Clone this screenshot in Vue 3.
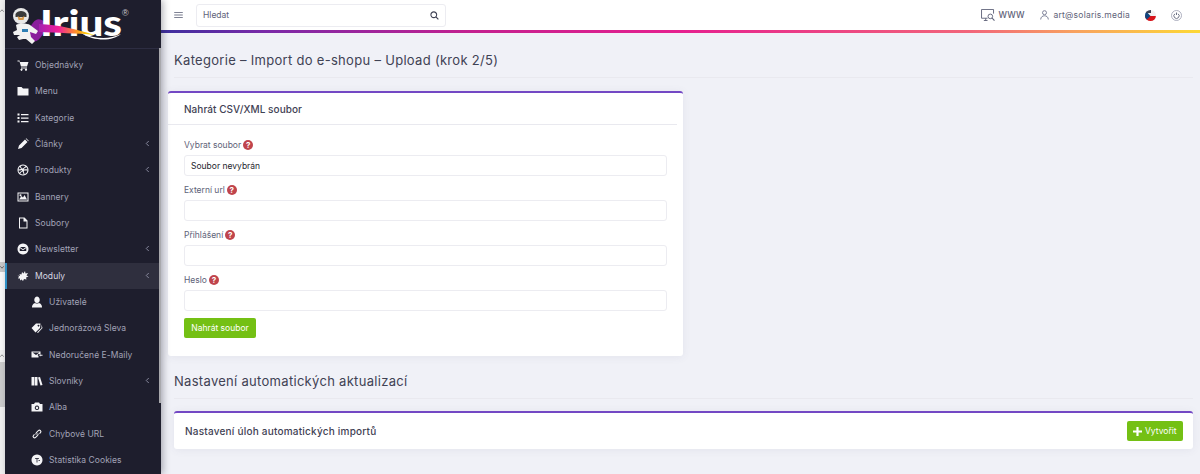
<script setup>
const icons = {
  cart: 'M1 3h4l1 3h17l-3 9H8L5 5H1zM8 17h12v2H8zM9 19.500a2 2 0 1 0 .01 0zM18 19.500a2 2 0 1 0 .01 0z',
  folder: 'M1 4h8l3 3h11v14H1z',
  list: 'M1 3h4v4H1zM8 4h15v2.400H8zM1 10h4v4H1zM8 11h15v2.400H8zM1 17h4v4H1zM8 18h15v2.400H8z',
  pencil: 'M2 22l2-7L16 3l5 5L9 20zM17.500 1.500l1-1 5 5-1 1z',
  ball: 'M12 1a11 11 0 1 0 .01 0zm0 2a9 9 0 0 1 5 1.600C15 7 12.500 8.500 10 9.300 9.200 7.500 8.200 5.500 7.400 4.300A9 9 0 0 1 12 3zM5.700 5.500C6.600 7 7.500 8.500 8.300 10 6.500 10.500 4.500 10.800 3.200 10.800A9 9 0 0 1 5.700 5.500zM18.500 5.800A9 9 0 0 1 21 11c-2.500-.4-4.800-.3-6.800.1-.3-.6-.5-1.100-.8-1.600 1.900-.9 3.700-2.200 5.100-3.700zM3 12.800c2 0 4.500-.3 6.200-1l.7 1.500C7.600 14.200 6 16 4.900 17.700A9 9 0 0 1 3 12.800zM11.500 15c.8 1.800 1.400 3.800 1.700 5.900A9 9 0 0 1 6.300 19c1-1.600 2.900-3.200 5.200-4zm2.800-1.900c1.900-.4 4.300-.4 6.700 0a9 9 0 0 1-5.900 7.400c-.3-1.900-.8-3.800-1.500-5.700z',
  image: 'M1 3h22v18H1zm2 2v14h18V5zm1 12l5-7 3 3 3-5 5 9zM7 6.500a2 2 0 1 0 .01 0z',
  file: 'M4 1h11l6 6v16H4zm2 2v18h13V9h-6V3z',
  mailc: 'M12 1a11 11 0 1 0 .01 0zM6 8h12l-6 4.500zm-.5 2l6.500 4.700 6.500-4.700V16h-13z',
  puzzle: 'M1 11l5 1-1-4 4 1 1-5 3 3 3-5 1 5 5-1-3 5 4 2-5 2 1 4-5-1-2 4-3-3-3 2 0-4-4 0 2-4z',
  user: 'M12 1a5.500 6.500 0 1 0 .01 0zM2 23c0-4 1-7 6-9 2.500 1.500 5.500 1.500 8 0 5 2 6 5 6 9z',
  tags: 'M1 12L10 3h9l-1 9-9 9zM15 5.500a1.800 1.800 0 1 0 .01 0zM21 5l2 7-9 10-2-1 9-9z',
  mail: 'M1 5h18v5h-4l-2 2 2 2v3H1zm2 2l7 5 7-5zM16 12l3-2v1.500h4v2h-4v1.500z',
  books: 'M1 4h6v17H1zM8 4h5v17H8zM14 5l4-1 5 16-4 1z',
  camera: 'M8 3h8l2 3h5v15H1V6h5zm4 6a4.500 4.500 0 1 0 .01 0zm0 2a2.500 2.500 0 1 1-.01 0z',
  link: 'M10 14a4 4 0 0 1 0-5.600l4-4a4 4 0 0 1 5.700 5.700l-2 2-1.500-1.500 2-2a2 2 0 0 0-2.800-2.800l-4 4a2 2 0 0 0 0 2.800zM14 10a4 4 0 0 1 0 5.600l-4 4a4 4 0 0 1-5.700-5.700l2-2 1.500 1.500-2 2a2 2 0 0 0 2.800 2.800l4-4a2 2 0 0 0 0-2.800z',
  cookie: 'M12 1a11 11 0 1 0 .01 0zM8 8h8v1.600h-3.200V17h-1.600V9.600H8zM15 12h3v1.500h-3z'
}
const menu = [
  { label: 'Objednávky', icon: 'cart' },
  { label: 'Menu', icon: 'folder' },
  { label: 'Kategorie', icon: 'list' },
  { label: 'Články', icon: 'pencil', arrow: true },
  { label: 'Produkty', icon: 'ball', arrow: true },
  { label: 'Bannery', icon: 'image' },
  { label: 'Soubory', icon: 'file' },
  { label: 'Newsletter', icon: 'mailc', arrow: true },
  { label: 'Moduly', icon: 'puzzle', arrow: true, active: true },
  { label: 'Uživatelé', icon: 'user', sub: true },
  { label: 'Jednorázová Sleva', icon: 'tags', sub: true },
  { label: 'Nedoručené E-Maily', icon: 'mail', sub: true },
  { label: 'Slovníky', icon: 'books', sub: true, arrow: true },
  { label: 'Alba', icon: 'camera', sub: true },
  { label: 'Chybové URL', icon: 'link', sub: true },
  { label: 'Statistika Cookies', icon: 'cookie', sub: true }
]
const fields = [
  { label: 'Vybrat soubor', value: 'Soubor nevybrán' },
  { label: 'Externí url', value: '' },
  { label: 'Přihlášení', value: '' },
  { label: 'Heslo', value: '' }
]
</script>

<template>
  <div class="app">
    <div class="strip">
      <div class="s1"><svg class="tick" viewBox="0 0 4 3"><path d="M.3 2.700L2 .8l1.700 1.900" fill="none" stroke="#666" stroke-width=".7" /></svg></div>
      <div class="s2"><svg class="tick" viewBox="0 0 4 3"><path d="M.3.3L2 2.200 3.700.3" fill="none" stroke="#444" stroke-width=".7" /></svg></div>
      <div class="s3"></div>
      <div class="s3b"><svg class="tick" viewBox="0 0 4 3"><path d="M.3 2.700L2 .8l1.700 1.900" fill="none" stroke="#666" stroke-width=".7" /></svg></div>
      <div class="s4"></div>
      <div class="s5"></div>
    </div>
    <aside class="sidebar">
      <div class="brand">
        <svg width="156" height="48" viewBox="0 0 156 48">
          <defs>
            <linearGradient id="sw" x1="0" x2="1" y1="0" y2="0">
              <stop offset="0" stop-color="#a51fb0" />
              <stop offset="0.35" stop-color="#f0209a" />
              <stop offset="0.7" stop-color="#ff9a1f" />
              <stop offset="1" stop-color="#fff200" />
            </linearGradient>
          </defs>
          <path d="M22 34C28 20 32 16 40 22L38 34C32 44 26 44 22 34z" fill="#8a1d9c" />
          <text x="35" y="36" class="logo-text" textLength="82" lengthAdjust="spacingAndGlyphs">Irius</text>
          <path d="M34 24C54 25 72 29 89 35 72 33 52 33 34 32z" fill="url(#sw)" />
          <path d="M76 33c14 6 28 7 40 1-8 7-26 8-40-1z" fill="#fff" />
          <text x="117" y="16" class="logo-r">®</text>
          <circle cx="16" cy="16" r="8" fill="#e8e8e8" />
          <path d="M10.500 14c2-4 9-4 11 0v3h-11z" fill="#3a3a3a" />
          <path d="M12.500 16l3.500 2 3.500-2-1 4h-5z" fill="#d89a4a" />
          <path d="M11 25c3-2 11-2 14 0l8 6-2 3-6-2 1 5 4 4-3 3-6-5-3 0-4 1-2-3 3-2-6 0-1-3 4-2z" fill="#f2f2f2" />
          <rect x="17" y="29" width="6" height="3" fill="#2f7fb5" />
        </svg>
      </div>
      <nav class="nav">
        <div v-for="item in menu" :key="item.label" :class="['item', { active: item.active, sub: item.sub }]">
          <svg class="ico" viewBox="0 0 24 24"><path :d="icons[item.icon]" fill-rule="evenodd" /></svg>
          <span class="lbl">{{ item.label }}</span>
          <svg v-if="item.arrow" class="chev" viewBox="0 0 6 8"><path d="M4.500 1L1.500 4l3 3" fill="none" stroke="currentColor" stroke-width="1.100" /></svg>
        </div>
      </nav>
      <div class="sbar"></div>
    </aside>
    <main class="main">
      <header class="top">
        <svg class="burger" viewBox="0 0 10 7"><path d="M0 .5h10M0 3.500h10M0 6.500h10" stroke="#5e6278" stroke-width="1" /></svg>
        <div class="search">
          <span>Hledat</span>
          <svg class="sico" viewBox="0 0 10 10"><circle cx="4.200" cy="4.200" r="3.200" fill="none" stroke="#3f4254" stroke-width="1.200" /><path d="M6.600 6.600L9.300 9.300" stroke="#3f4254" stroke-width="1.300" /></svg>
        </div>
        <div class="tools">
          <div class="tool t-www">
            <svg class="wico" viewBox="0 0 15 13"><path d="M7 10H.5V.5h13V5M3 12.500h4M5 10v2.500" fill="none" stroke="#5e6278" stroke-width="1" /><circle cx="10" cy="8" r="2.500" fill="none" stroke="#5e6278" /><path d="M12 10l2.500 2.500" stroke="#5e6278" stroke-width="1.200" /></svg>
            <span>WWW</span>
          </div>
          <div class="tool t-user">
            <svg class="uico" viewBox="0 0 9 10"><circle cx="4.500" cy="2.700" r="2" fill="none" stroke="#7e8299" /><path d="M.7 9.500c0-5 7.600-5 7.600 0" fill="none" stroke="#7e8299" /></svg>
            <span>art@solaris.media</span>
          </div>
          <svg class="flag" viewBox="0 0 11 11"><defs><clipPath id="fc"><circle cx="5.500" cy="5.500" r="5.500" /></clipPath></defs><g clip-path="url(#fc)"><rect width="11" height="6" fill="#f2f2f2" /><rect y="6" width="11" height="5" fill="#d7141a" /><path d="M0 0l5.500 6L0 11z" fill="#11457e" /><rect x="1" y="0" width="5" height="3" fill="#3c4458" /></g></svg>
          <svg class="pow" viewBox="0 0 11 11"><circle cx="5.500" cy="5.500" r="5" fill="none" stroke="#9a9db0" stroke-width=".8" /><path d="M3.900 3.800a2.600 2.600 0 1 0 3.200 0" fill="none" stroke="#5e6278" stroke-width=".9" /><path d="M5.500 2.500v2.500" stroke="#5e6278" stroke-width=".9" /></svg>
        </div>
      </header>
      <div class="rainbow"></div>
      <section class="content">
        <h1 class="title first">Kategorie – Import do e-shopu – Upload (krok 2/5)</h1>
        <div class="card upload">
          <div class="card-head">Nahrát CSV/XML soubor</div>
          <div class="card-body">
            <div v-for="f in fields" :key="f.label" class="field">
              <label class="flabel">{{ f.label }}<span class="help">?</span></label>
              <div class="input">{{ f.value }}</div>
            </div>
            <button class="btn">Nahrát soubor</button>
          </div>
        </div>
        <h2 class="title second">Nastavení automatických aktualizací</h2>
        <div class="card tasks">
          <span class="tasks-title">Nastavení úloh automatických importů</span>
          <button class="btn add">
            <svg class="plus" viewBox="0 0 10 10"><path d="M3.800 0h2.400v3.800H10v2.400H6.200V10H3.800V6.200H0V3.800h3.800z" fill="#fff" /></svg>
            Vytvořit
          </button>
        </div>
      </section>
    </main>
  </div>
</template>

<style>
html, body { margin: 0; background: #f0f1f7; overflow: hidden; }
</style>

<style scoped>
.app {
  display: flex;
  width: 1200px;
  height: 474px;
  overflow: hidden;
  font-family: Inter, "Open Sans", sans-serif;
  background: #f0f1f7;
}
.strip { width: 5px; flex: none; display: flex; flex-direction: column; }
.tick { display: block; width: 4px; height: 3px; }
.s1 { height: 262px; background: #f1f1f1; padding-top: 9px; box-sizing: border-box; }
.s2 { height: 10px; background: #c9c9c9; padding-top: 4px; box-sizing: border-box; }
.s3 { height: 78px; background: #fafafa; }
.s3b { height: 12px; background: #f1f1f1; padding-top: 4px; box-sizing: border-box; }
.s4 { height: 45px; background: #cdcdcd; }
.s5 { flex: 1; background: #f1f1f1; }
.sidebar {
  position: relative;
  z-index: 2;
  width: 156px;
  flex: none;
  background: #1e1e2d;
  box-shadow: 2px 0 7px rgba(30, 30, 45, .35);
  overflow: hidden;
}
.brand { height: 48px; border-bottom: 1px solid #2d2d42; }
.brand svg { display: block; }
.logo-text { font-family: Lato, sans-serif; font-weight: 900; font-size: 36px; fill: #fff; }
.logo-r { font-family: "Liberation Sans", sans-serif; font-size: 9px; fill: #c9c9cf; }
.nav { padding-top: 3px; }
.item {
  position: relative;
  display: flex;
  align-items: center;
  height: 26.33px;
  padding-left: 12px;
  color: #a2a3b7;
  font-size: 8.5px;
  letter-spacing: .05px;
}
.item.sub { padding-left: 26px; }
.item.active { background: #2f2f3e; color: #d8d8e2; box-shadow: inset 2px 0 0 #2f8fc4; }
.ico { width: 12px; height: 12px; fill: #f4f4f6; flex: none; margin-right: 6px; }
.lbl { white-space: nowrap; }
.chev { position: absolute; left: 140px; top: 9px; width: 5px; height: 7px; color: #8f90a6; }
.sbar { position: absolute; right: 0; top: 48px; width: 2px; height: 355px; background: #a9a9ad; }
.main { flex: 1; min-width: 0; display: flex; flex-direction: column; }
.top {
  height: 30px;
  background: #fff;
  display: flex;
  align-items: center;
  padding-left: 13px;
  flex: none;
}
.burger { width: 9px; height: 6px; margin-right: 13px; }
.search {
  width: 250px;
  height: 23px;
  box-sizing: border-box;
  border: 1px solid #ececf1;
  border-radius: 3px;
  display: flex;
  align-items: center;
  justify-content: space-between;
  padding: 0 6px;
  font-size: 8.5px;
  color: #5e6278;
}
.sico { width: 9px; height: 9px; }
.tools { margin-left: auto; display: flex; align-items: center; padding-right: 18px; color: #5e6278; font-size: 8.5px; }
.tool { display: flex; align-items: center; }
.t-www { margin-right: 16px; font-weight: 500; }
.t-user { margin-right: 15px; letter-spacing: .25px; }
.wico { width: 14px; height: 12px; margin-right: 3px; }
.uico { width: 9px; height: 10px; margin-right: 4px; }
.flag { width: 11px; height: 11px; margin-right: 15px; }
.pow { width: 11px; height: 11px; }
.rainbow {
  height: 3px;
  flex: none;
  background: linear-gradient(90deg, #3d2f9e 0%, #7a2aa8 10%, #c4208f 30%, #e6208f 50%, #f2667a 78%, #f8a25f 88%, #fdd835 100%);
}
.content { flex: 1; padding: 0 7px 0 13px; }
.title {
  margin: 0;
  font-weight: 400;
  font-size: 13px;
  line-height: 20px;
  color: #3f4254;
  border-bottom: 1px solid #e9e9ef;
  letter-spacing: .3px;
  white-space: nowrap;
}
.first { padding: 17px 0 7px; }
.second { padding: 15px 0 7px; }
.card { background: #fff; border-top: 2px solid #7348c4; border-radius: 3px; box-shadow: 0 1px 8px rgba(80, 80, 120, .08); box-sizing: border-box; }
.upload { width: 515px; margin: 13px 0 0 -6px; height: 265px; }
.card-head {
  height: 31px;
  margin-right: 6px;
  padding-left: 16px;
  border-bottom: 1px solid #e9e9ef;
  display: flex;
  align-items: center;
  font-size: 10px;
  font-weight: 500;
  color: #3f4254;
  letter-spacing: .05px;
}
.card-body { padding: 13px 16px 0; }
.field { margin-bottom: 7px; }
.flabel { display: flex; align-items: center; height: 14px; margin-bottom: 3px; font-size: 8.5px; color: #5e6278; }
.help {
  width: 10px; height: 10px; margin-left: 2px; border-radius: 50%;
  background: #c0444c; color: #fff; font-size: 8px; font-weight: 700;
  display: flex; align-items: center; justify-content: center;
}
.input {
  height: 21px;
  width: 483px;
  box-sizing: border-box;
  border: 1px solid #ececf1;
  border-radius: 3px;
  padding: 0 6px;
  display: flex;
  align-items: center;
  font-size: 8.5px;
  color: #1e1e2d;
}
.btn {
  font-family: inherit;
  height: 20px;
  border: 0;
  border-radius: 2px;
  background: #74c014;
  color: #fff;
  font-size: 8.5px;
  font-weight: 400;
  padding: 0 7px;
  display: flex;
  align-items: center;
}
.upload .btn { width: 72px; justify-content: center; padding: 0; }
.tasks {
  margin-top: 12px;
  height: 38px;
  padding: 0 10px 0 11px;
  display: flex;
  align-items: center;
  justify-content: space-between;
}
.tasks-title { font-size: 10px; font-weight: 500; color: #3f4254; letter-spacing: .22px; }
.add { width: 56px; padding: 0 0 0 6px; box-sizing: border-box; }
.plus { width: 9px; height: 9px; margin-right: 3px; }
</style>
